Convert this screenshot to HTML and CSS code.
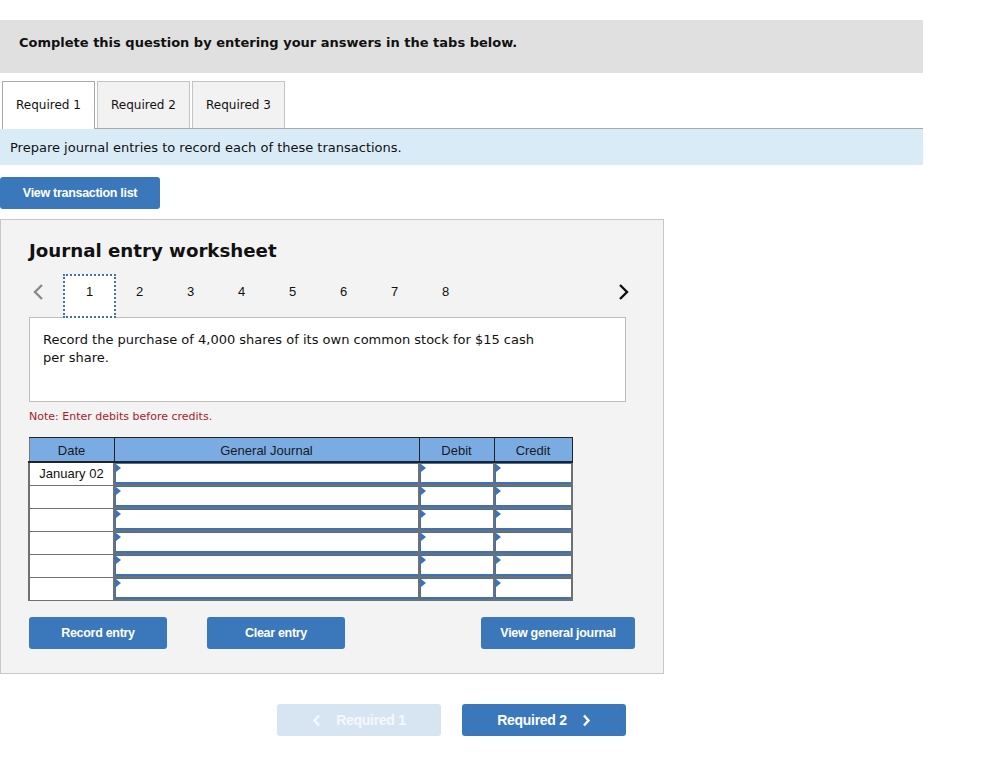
FILE: index.html
```html
<!DOCTYPE html>
<html>
<head>
	<meta charset="utf-8">
	<title>Journal entry worksheet</title>
	<link rel="stylesheet" href="styles.css">
</head>
<body>

<div class="question-head">Complete this question by entering your answers in the tabs below.</div>

<div class="tabs">
	<div class="tab active">Required 1</div>
	<div class="tab">Required 2</div>
	<div class="tab">Required 3</div>
</div>

<div class="instruction">Prepare journal entries to record each of these transactions.</div>

<button class="btn btn-list" type="button">View transaction list</button>

<section class="worksheet">
	<h2>Journal entry worksheet</h2>

	<div class="pager">
		<span class="chev chev-left"><svg width="12" height="18" viewBox="0 0 12 18"><path d="M10 2 L3 9 L10 16" fill="none" stroke="#8a8a8a" stroke-width="2.4"/></svg></span>
		<span class="page current">1</span>
		<span class="page">2</span>
		<span class="page">3</span>
		<span class="page">4</span>
		<span class="page">5</span>
		<span class="page">6</span>
		<span class="page">7</span>
		<span class="page">8</span>
		<span class="chev chev-right"><svg width="12" height="18" viewBox="0 0 12 18"><path d="M2 2 L9 9 L2 16" fill="none" stroke="#111" stroke-width="2.4"/></svg></span>
	</div>

	<div class="description">
		<p>Record the purchase of 4,000 shares of its own common stock for $15 cash per share.</p>
	</div>

	<div class="note">Note: Enter debits before credits.</div>

	<table class="journal">
		<thead>
			<tr>
				<th class="c-date">Date</th>
				<th class="c-acct">General Journal</th>
				<th class="c-debit">Debit</th>
				<th class="c-credit">Credit</th>
			</tr>
		</thead>
		<tbody>
			<tr>
				<td class="date">January 02</td>
				<td><div class="cell"></div></td>
				<td><div class="cell"></div></td>
				<td><div class="cell"></div></td>
			</tr>
			<tr>
				<td class="date"></td>
				<td><div class="cell"></div></td>
				<td><div class="cell"></div></td>
				<td><div class="cell"></div></td>
			</tr>
			<tr>
				<td class="date"></td>
				<td><div class="cell"></div></td>
				<td><div class="cell"></div></td>
				<td><div class="cell"></div></td>
			</tr>
			<tr>
				<td class="date"></td>
				<td><div class="cell"></div></td>
				<td><div class="cell"></div></td>
				<td><div class="cell"></div></td>
			</tr>
			<tr>
				<td class="date"></td>
				<td><div class="cell"></div></td>
				<td><div class="cell"></div></td>
				<td><div class="cell"></div></td>
			</tr>
			<tr>
				<td class="date"></td>
				<td><div class="cell"></div></td>
				<td><div class="cell"></div></td>
				<td><div class="cell"></div></td>
			</tr>
		</tbody>
	</table>

	<div class="actions">
		<button class="btn btn-record" type="button">Record entry</button>
		<button class="btn btn-clear" type="button">Clear entry</button>
		<button class="btn btn-view" type="button">View general journal</button>
	</div>
</section>

<div class="step-nav">
	<button class="btn btn-step disabled" type="button"><svg class="arr arr-prev" width="9" height="13" viewBox="0 0 9 13"><path d="M7 1.5 L2.5 6.5 L7 11.5" fill="none" stroke="#f5f8fc" stroke-width="2.4"/></svg>Required 1</button>
	<button class="btn btn-step" type="button">Required 2<svg class="arr arr-next" width="9" height="13" viewBox="0 0 9 13"><path d="M2 1.5 L6.5 6.5 L2 11.5" fill="none" stroke="#fff" stroke-width="2.4"/></svg></button>
</div>

</body>
</html>
```

FILE: styles.css
```css
body {
	margin: 0;
	padding: 20px 0 0;
	font-family: "DejaVu Sans", Verdana, sans-serif;
	color: #111;
	background: #fff;
}

.question-head {
	width: 904px;
	height: 53px;
	padding: 0 0 0 19px;
	background: #e0e0e0;
	font-size: 13px;
	font-weight: 700;
	line-height: 45px;
}

.tabs {
	display: flex;
	gap: 2px;
	margin: 8px 0 0 2px;
	width: 921px;
	border-bottom: 1px solid #a9a9a9;
}

.tab {
	width: 91px;
	height: 46px;
	line-height: 47px;
	text-align: center;
	font-size: 12px;
	background: #f2f2f2;
	border: 1px solid #c3c3c3;
	border-bottom: 0;
	margin-bottom: -1px;
}

.tab.active {
	background: #fff;
	border-color: #a9a9a9;
	height: 47px;
}

.instruction {
	width: 913px;
	height: 36px;
	padding: 0 0 0 10px;
	background: #daebf8;
	font-size: 13px;
	line-height: 37px;
}

.btn {
	font-family: "Liberation Sans", Arial, sans-serif;
	font-size: 12.5px;
	font-weight: 700;
	letter-spacing: -0.3px;
	color: #fff;
	background: #3b77bb;
	border: 0;
	border-radius: 3px;
	height: 32px;
	padding: 0;
	cursor: pointer;
}

.btn-list {
	display: block;
	width: 160px;
	margin: 12px 0 0;
}

.worksheet {
	width: 664px;
	height: 455px;
	margin: 10px 0 0;
	background: #f3f3f3;
	border: 1px solid #c8c8c8;
	box-sizing: border-box;
	padding: 18px 37px 0 28px;
}

.worksheet h2 {
	margin: 0;
	font-size: 18.2px;
	font-weight: 700;
	line-height: 26px;
}

.pager {
	display: flex;
	align-items: flex-start;
	margin: 10px 0 0;
	height: 44px;
	position: relative;
	z-index: 1;
}

.chev {
	display: flex;
	align-items: center;
	height: 36px;
}

.chev-left {
	margin: 0 0 0 3px;
	width: 31px;
}

.chev-right {
	margin-left: auto;
	margin-right: -4px;
}

.page {
	width: 51px;
	height: 44px;
	text-align: center;
	line-height: 36px;
	font-family: "Liberation Sans", Arial, sans-serif;
	font-size: 13px;
	box-sizing: border-box;
}

.page.current {
	width: 53px;
	margin-right: -2px;
	background: #fff;
	border: 2px dotted #3b73b9;
	line-height: 32px;
}

.description {
	height: 85px;
	margin: -1px 0 0;
	background: #fff;
	border: 1px solid #bdbdbd;
	box-sizing: border-box;
	padding: 13px 13px;
}

.description p {
	margin: 0;
	max-width: 500px;
	font-size: 13px;
	line-height: 18px;
}

.note {
	margin: 7px 0 0;
	font-size: 11px;
	color: #a61c2e;
	line-height: 16px;
}

.journal {
	margin: 12px 0 0 -1px;
	border-collapse: collapse;
	font-family: "Liberation Sans", Arial, sans-serif;
	font-size: 13px;
}

.journal th {
	height: 22px;
	padding: 1px 0 0;
	background: #7aabe2;
	border: 1px solid #222;
	border-bottom-width: 2px;
	font-weight: 400;
	color: #1a1a1a;
}

.journal .c-date { width: 84px; }
.journal .c-acct { width: 304px; }
.journal .c-debit { width: 74px; }
.journal .c-credit { width: 77px; }

.journal th:first-child {
	border-left-color: #777;
}

.journal td {
	height: 21px;
	padding: 0;
	border: 2px solid #707070;
	border-top: 0;
	background: #fff;
}

.journal td.date {
	border-width: 0 1px 1px 2px;
	text-align: center;
	vertical-align: top;
	line-height: 21px;
}

.cell {
	position: relative;
	height: 21px;
	box-sizing: border-box;
	border-top: 1px solid #3b73b9;
	border-bottom: 2px solid #3b73b9;
	border-left: 1px solid #3b73b9;
}

.cell::before {
	content: "";
	position: absolute;
	left: 0;
	top: 0;
	border-left: 5px solid #3b73b9;
	border-top: 4px solid transparent;
	border-bottom: 4px solid transparent;
}

.actions {
	display: flex;
	margin: 16px 0 0;
}

.btn-record,
.btn-clear {
	width: 138px;
}

.btn-clear {
	margin-left: 40px;
}

.btn-view {
	width: 154px;
	margin-left: auto;
	margin-right: -9px;
}

.step-nav {
	display: flex;
	gap: 21px;
	margin: 30px 0 0 277px;
}

.btn-step {
	display: flex;
	align-items: center;
	justify-content: center;
	width: 164px;
	font-size: 14px;
}

.btn-step.disabled {
	background: #d7e4f2;
	color: #f5f8fc;
}

.arr-prev {
	margin-right: 15px;
}

.arr-next {
	margin-left: 15px;
}
```
